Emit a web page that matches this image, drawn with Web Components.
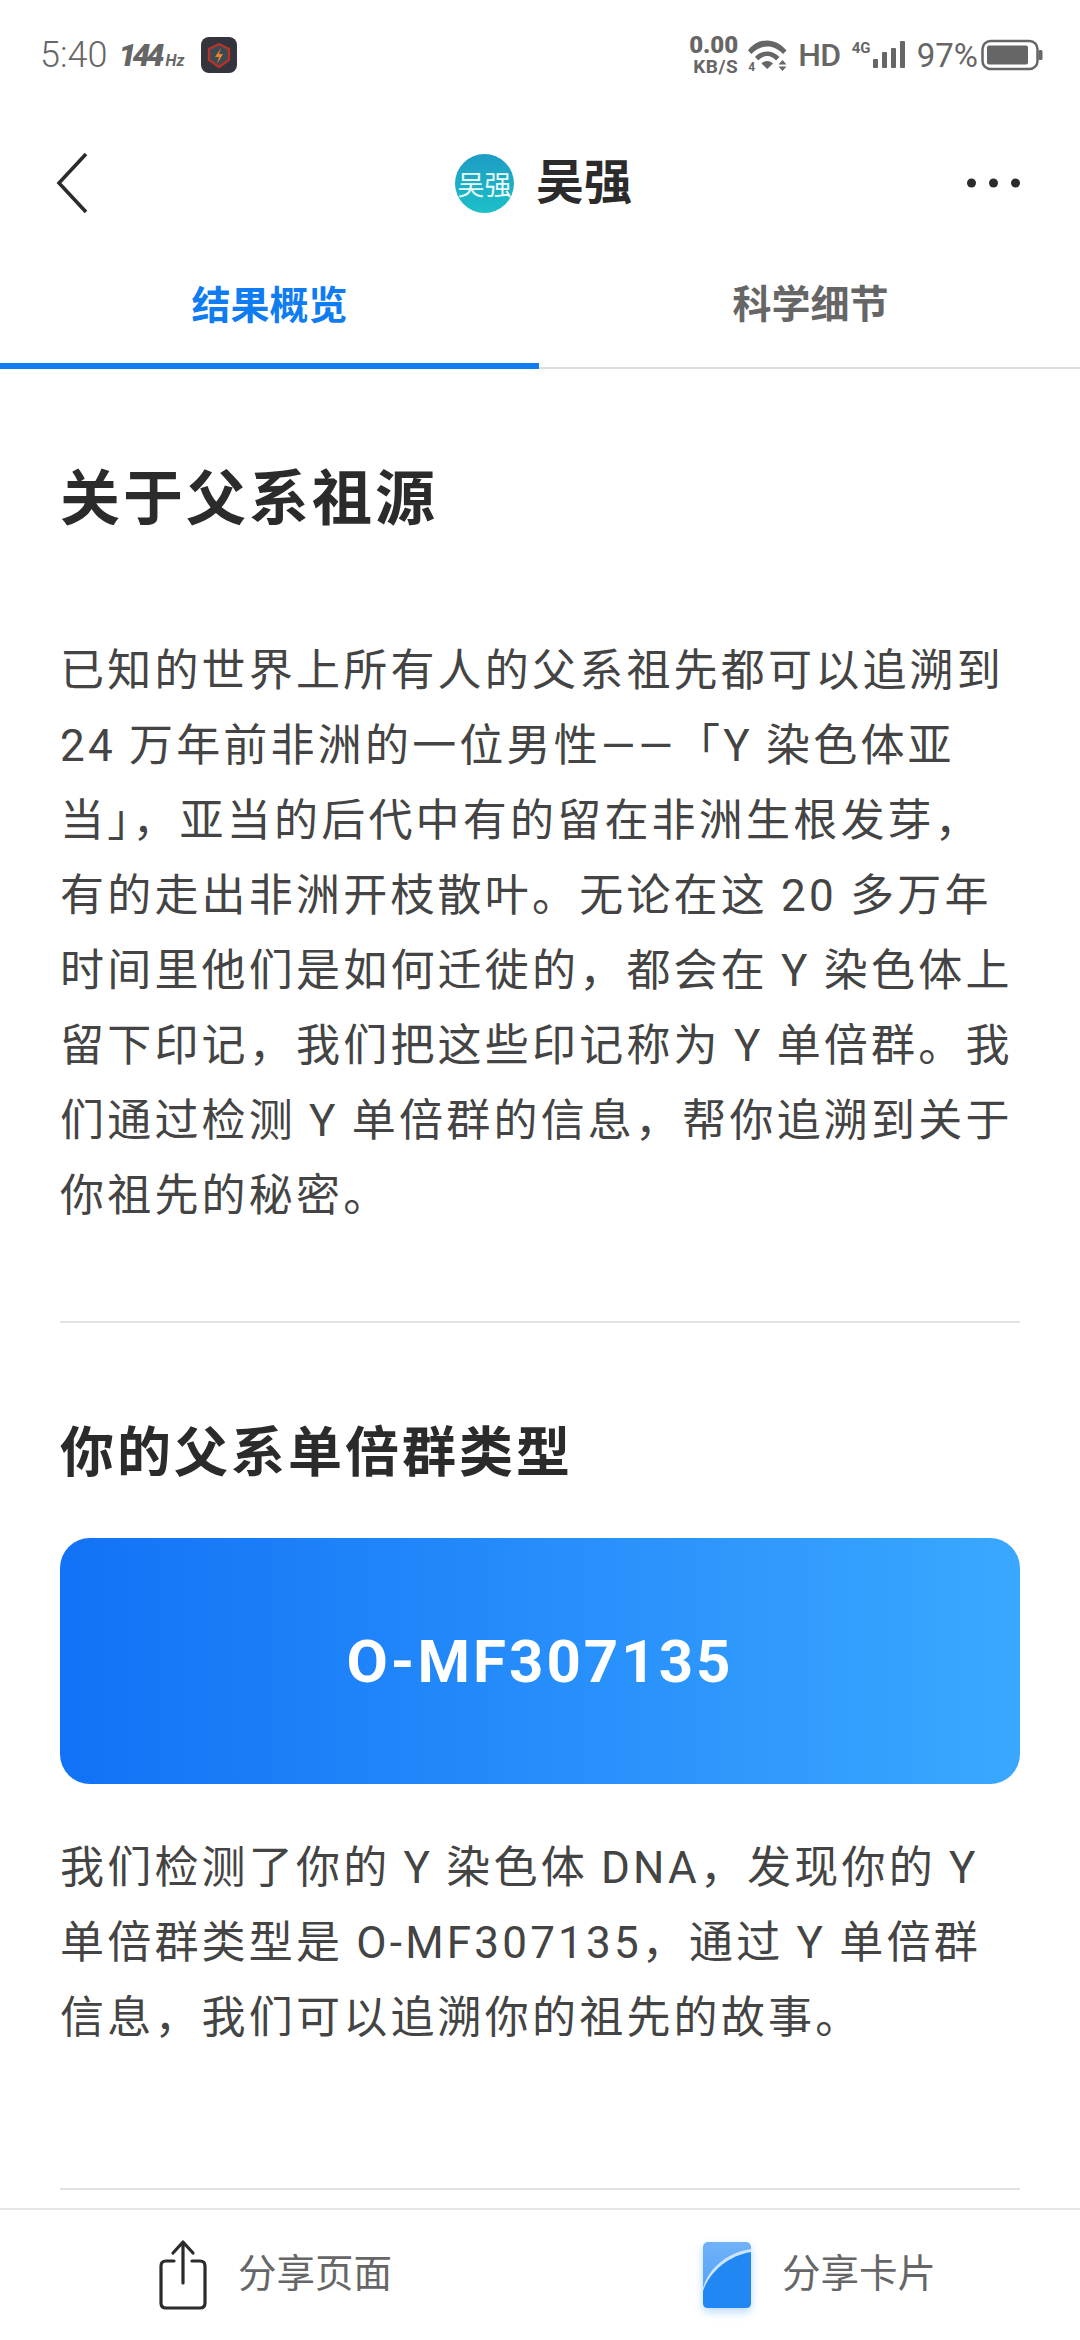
<!DOCTYPE html>
<html lang="zh-CN">
<head>
<meta charset="utf-8">
<style>
  html, body { margin: 0; padding: 0; background: #fff; }
  body {
    width: 1080px;
    height: 2340px;
    overflow: hidden;
    display: flex;
    flex-direction: column;
    font-family: Roboto, "Noto Sans CJK SC", sans-serif;
  }
</style>
</head>
<body>
<status-bar></status-bar>
<nav-bar name="吴强"></nav-bar>
<tab-bar first="结果概览" second="科学细节"></tab-bar>
<page-content>
  <intro-section heading="关于父系祖源">
    已知的世界上所有人的父系祖先都可以追溯到<br>24 万年前非洲的一位男性——「Y 染色体亚<br>当」，亚当的后代中有的留在非洲生根发芽，<br>有的走出非洲开枝散叶。无论在这 20 多万年<br>时间里他们是如何迁徙的，都会在 Y 染色体上<br>留下印记，我们把这些印记称为 Y 单倍群。我<br>们通过检测 Y 单倍群的信息，帮你追溯到关于<br>你祖先的秘密。
  </intro-section>
  <haplo-section heading="你的父系单倍群类型" code="O-MF307135">
    我们检测了你的 Y 染色体 DNA，发现你的 Y<br>单倍群类型是 O-MF307135，通过 Y 单倍群<br>信息，我们可以追溯你的祖先的故事。
  </haplo-section>
</page-content>
<bottom-bar></bottom-bar>

<script>
class StatusBar extends HTMLElement {
  constructor() {
    super();
    this.attachShadow({ mode: 'open' });
    this.shadowRoot.innerHTML = `
    <style>
      :host { display: flex; align-items: center; justify-content: space-between; height: 110px; flex: none; padding: 0 37px 0 40px; box-sizing: border-box; color: #666; font-family: Roboto, sans-serif; }
      .side { display: flex; align-items: center; }
      .time { font-size: 36px; font-weight: 300; }
      .hz { margin-left: 11px; font-size: 32px; font-weight: 900; font-style: italic; letter-spacing: -4px; white-space: nowrap; }
      .hz small { font-size: 16px; font-weight: 700; letter-spacing: 0; margin-left: 5px; }
      .app { margin-left: 17px; display: block; }
      .speed { display: flex; flex-direction: column; align-items: flex-end; width: 50px; font-weight: 700; }
      .speed b { font-size: 24px; line-height: 23px; }
      .speed span { font-size: 19px; line-height: 19px; letter-spacing: .5px; }
      .wifi { position: relative; margin-left: 10px; }
      .wifi span { position: absolute; left: 0; bottom: -3px; font-size: 12px; line-height: 14px; font-weight: 700; }
      .hd { font-size: 32px; font-weight: 500; margin-left: 11px; letter-spacing: -.5px; }
      .signal { position: relative; margin-left: 11px; }
      .signal span { position: absolute; left: 0; top: -1px; font-size: 15px; line-height: 16px; font-weight: 700; }
      .pct { font-size: 33px; margin-left: 12px; }
      svg { display: block; }
    </style>
    <div class="side">
      <span class="time">5:40</span>
      <span class="hz">144<small>Hz</small></span>
      <svg class="app" width="36" height="36" viewBox="0 0 36 36">
        <rect width="36" height="36" rx="8" fill="#34343e"/>
        <path d="M18 7 L28 12 V23 L18 30 L8 23 V12 Z" fill="#3d4a52" stroke="#b5332b" stroke-width="2.400"/>
        <path d="M20 11 L14 20 H18 L16 27 L22 17 H18 Z" fill="#e8842c"/>
      </svg>
    </div>
    <div class="side">
      <div class="speed"><b>0.00</b><span>KB/S</span></div>
      <div class="wifi">
        <svg width="39" height="31" viewBox="0 0 39 31" fill="#666">
          <path d="M0 10.500 C10 -3 28 -3 38.500 10.500 L35 14 C26 4 12.500 4 3.500 14 Z"/>
          <path d="M7 17 C13.500 9.500 25 9.500 31.500 17 L28 20.500 C23 14.500 15.500 14.500 10.500 20.500 Z"/>
          <path d="M13.500 23.500 C16.500 20 22 20 25 23.500 L19.250 29 Z"/>
          <path d="M34.500 20 L38.500 24.500 H30.500 Z M34.500 31 L30.500 26.500 H38.500 Z"/>
        </svg>
        <span>4</span>
      </div>
      <span class="hd">HD</span>
      <div class="signal">
        <svg width="53" height="28" viewBox="0 0 53 28" fill="#666">
          <rect x="21" y="18" width="5" height="9" rx="1"/>
          <rect x="30" y="11" width="5" height="16" rx="1"/>
          <rect x="39" y="7" width="5" height="20" rx="1"/>
          <rect x="48" y="0" width="5" height="27" rx="1"/>
        </svg>
        <span>4G</span>
      </div>
      <span class="pct">97%</span>
      <svg style="margin-left:3px" width="62" height="32" viewBox="0 0 62 32">
        <rect x="1.500" y="2" width="55" height="28" rx="8" fill="none" stroke="#666" stroke-width="2.500"/>
        <rect x="6" y="6.500" width="41" height="19" rx="2" fill="#666"/>
        <rect x="57.500" y="11" width="4" height="10" rx="1.500" fill="#666"/>
      </svg>
    </div>`;
  }
}

class NavBar extends HTMLElement {
  constructor() {
    super();
    this.attachShadow({ mode: 'open' });
  }
  connectedCallback() {
    const name = this.getAttribute('name') || '';
    this.shadowRoot.innerHTML = `
    <style>
      :host { display: flex; align-items: center; justify-content: space-between; height: 146px; flex: none; padding: 0 60px 0 56px; box-sizing: border-box; font-family: Roboto, "Noto Sans CJK SC", sans-serif; color: #2b2b2b; }
      .who { display: flex; align-items: center; gap: 22px; margin-left: 32px; }
      .avatar { width: 59px; height: 59px; border-radius: 50%; background: linear-gradient(180deg, #1e9cc4, #1cc0c8); color: #e9fbfb; font-size: 27px; display: flex; align-items: center; justify-content: center; }
      .name { font-size: 48px; font-weight: 700; line-height: 60px; }
      svg { display: block; }
    </style>
    <svg width="32" height="62" viewBox="0 0 32 62"><path d="M30 2 L3 31 L30 60" fill="none" stroke="#2b2b2b" stroke-width="3.600"/></svg>
    <div class="who"><div class="avatar">${name}</div><div class="name">${name}</div></div>
    <svg width="53" height="12" viewBox="0 0 53 12" fill="#2b2b2b"><circle cx="4.500" cy="6" r="4.500"/><circle cx="26.500" cy="6" r="4.500"/><circle cx="48.500" cy="6" r="4.500"/></svg>`;
  }
}

class TabBar extends HTMLElement {
  constructor() {
    super();
    this.attachShadow({ mode: 'open' });
  }
  connectedCallback() {
    this.shadowRoot.innerHTML = `
    <style>
      :host { display: flex; height: 113px; flex: none; box-sizing: border-box; border-bottom: 2px solid #ddd; font-size: 39px; font-weight: 700; font-family: Roboto, "Noto Sans CJK SC", sans-serif; }
      .tab { flex: 1; display: flex; align-items: center; justify-content: center; color: #666; padding: 0 0 22px 2px; box-sizing: border-box; }
      .on { color: #0f7cf2; border-bottom: 6px solid #0f7cf2; margin-bottom: -2px; padding: 0 0 16px; height: 113px; }
    </style>
    <div class="tab on">${this.getAttribute('first')}</div>
    <div class="tab">${this.getAttribute('second')}</div>`;
  }
}

class PageContent extends HTMLElement {
  constructor() {
    super();
    this.attachShadow({ mode: 'open' });
    this.shadowRoot.innerHTML = `
    <style>
      :host { display: block; flex: 1; min-height: 0; padding: 0 60px; overflow: hidden; }
    </style>
    <slot></slot>`;
  }
}

class IntroSection extends HTMLElement {
  constructor() {
    super();
    this.attachShadow({ mode: 'open' });
  }
  connectedCallback() {
    this.shadowRoot.innerHTML = `
    <style>
      :host { display: block; border-bottom: 2px solid #e3e3e3; padding: 93px 0 87px; color: #444; }
      h2 { margin: 0 0 96px; font-size: 60px; line-height: 76px; font-weight: 700; letter-spacing: 3px; color: #2b2b2b; }
      .body { font-size: 44px; line-height: 75px; letter-spacing: 3.200px; word-spacing: -1px; white-space: nowrap; }
    </style>
    <h2>${this.getAttribute('heading')}</h2>
    <div class="body"><slot></slot></div>`;
  }
}

class HaploSection extends HTMLElement {
  constructor() {
    super();
    this.attachShadow({ mode: 'open' });
  }
  connectedCallback() {
    this.shadowRoot.innerHTML = `
    <style>
      :host { display: block; border-bottom: 2px solid #e3e3e3; padding: 96px 0 132px; color: #444; }
      h3 { margin: 0 0 49px; font-size: 54px; line-height: 70px; font-weight: 700; letter-spacing: 3px; color: #2b2b2b; }
      .card { height: 246px; border-radius: 30px; background: linear-gradient(90deg, #1272f6, #3aa8ff); color: #fff; display: flex; align-items: center; justify-content: center; font-size: 60px; font-weight: 700; letter-spacing: 3px; margin-bottom: 47px; }
      .body { font-size: 44px; line-height: 75px; letter-spacing: 3.200px; word-spacing: -1px; white-space: nowrap; }
    </style>
    <h3>${this.getAttribute('heading')}</h3>
    <div class="card">${this.getAttribute('code')}</div>
    <div class="body"><slot></slot></div>`;
  }
}

class BottomBar extends HTMLElement {
  constructor() {
    super();
    this.attachShadow({ mode: 'open' });
    this.shadowRoot.innerHTML = `
    <style>
      :host { display: grid; grid-template-columns: 1fr 1fr; height: 132px; flex: none; box-sizing: border-box; border-top: 2px solid #e6e6e6; color: #666; font-size: 38.500px; font-family: Roboto, "Noto Sans CJK SC", sans-serif; background: #fff; }
      .act { display: flex; align-items: center; gap: 31px; padding-left: 159px; }
      .act + .act { padding-left: 163px; }
      .act span { padding-bottom: 10px; }
      svg { display: block; overflow: visible; }
    </style>
    <div class="act">
      <svg width="48" height="70" viewBox="0 0 48 70" fill="none" stroke="#2b2b2b" stroke-width="3.200" stroke-linecap="round" stroke-linejoin="round">
        <path d="M15 21 H7 Q2 21 2 26 V63 Q2 68 7 68 H41 Q46 68 46 63 V26 Q46 21 41 21 H33"/>
        <path d="M24 43 V3 M14 13 L24 2 L34 13"/>
      </svg>
      <span>分享页面</span>
    </div>
    <div class="act">
      <svg width="48" height="66" viewBox="0 0 48 66">
        <defs>
          <linearGradient id="cardTop" x1="0" y1="0" x2="0" y2="1"><stop offset="0" stop-color="#6fb2f8"/><stop offset="1" stop-color="#4d9cf5"/></linearGradient>
          <filter id="cardShadow" x="-30%" y="-20%" width="160%" height="150%"><feDropShadow dx="0" dy="4" stdDeviation="4" flood-color="#1c86f2" flood-opacity=".3"/></filter>
        </defs>
        <rect width="48" height="66" rx="5" fill="url(#cardTop)" filter="url(#cardShadow)"/>
        <path d="M0 46 C5 28 22 11 48 7 V61 Q48 66 43 66 H5 Q0 66 0 61 Z" fill="#cfe5fc"/>
        <path d="M0 49 C6 31 24 14 48 10 V61 Q48 66 43 66 H5 Q0 66 0 61 Z" fill="#2188f3"/>
      </svg>
      <span>分享卡片</span>
    </div>`;
  }
}

customElements.define('status-bar', StatusBar);
customElements.define('nav-bar', NavBar);
customElements.define('tab-bar', TabBar);
customElements.define('page-content', PageContent);
customElements.define('intro-section', IntroSection);
customElements.define('haplo-section', HaploSection);
customElements.define('bottom-bar', BottomBar);
</script>
</body>
</html>
